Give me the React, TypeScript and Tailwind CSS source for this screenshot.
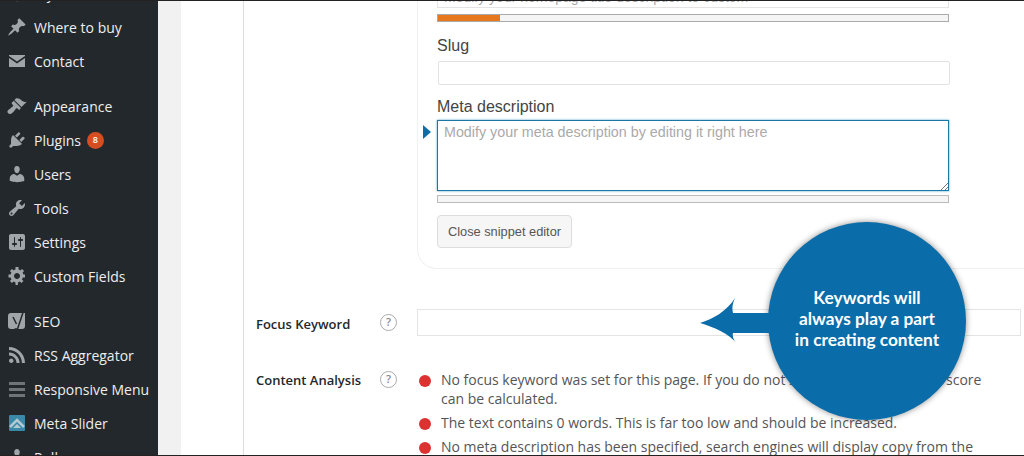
import type { ReactNode } from 'react';

const DashIcon = ({ d, rule }: { d: string; rule?: 'evenodd' }) => (
  <svg width="20" height="20" viewBox="0 0 20 20">
    <path fill="#a0a5aa" fillRule={rule} d={d} />
  </svg>
);

const PIN = 'M10.44 3.02l1.82-1.82 6.36 6.35-1.83 1.82c-1.05-.68-2.48-.57-3.41.36l-.75.75c-.92.93-1.04 2.35-.35 3.41l-1.83 1.82-2.41-2.41-2.8 2.79c-.42.42-3.38 2.71-3.8 2.29s1.86-3.39 2.28-3.81l2.79-2.79L4.1 9.36l1.83-1.82c1.05.69 2.48.57 3.41-.36l.75-.75c.93-.92 1.04-2.35.35-3.41z';
const MAIL = 'M2 4h16v1L10 10.500 2 5zM2 7l8 5.500L18 7v9H2z';
const BRUSH = 'M14.48 11.06L7.41 3.99l1.5-1.5c.5-.56 2.3-.47 3.51.32 1.21.8 1.43 1.28 2.91 2.1 1.18.64 2.45 1.26 4.45.85zm-.71.71L6.7 4.7 4.93 6.47c-.39.39-.39 1.02 0 1.41l1.06 1.06c.39.39.39 1.03 0 1.42-.6.6-1.43 1.11-2.21 1.69-.35.26-.7.53-1.01.84C1.43 13.23.4 14.8.4 15.6c0 1.22 1.22 2.41 2.44 2.44.8 0 2.37-1.03 3.71-2.37.31-.31.58-.66.84-1.01.58-.78 1.09-1.61 1.69-2.21.39-.39 1.03-.39 1.42 0l1.06 1.06c.39.39 1.02.39 1.41 0z';
const PLUG = 'M13.11 4.36L9.87 7.6 8 5.73l3.24-3.24c.35-.34 1.05-.2 1.56.32.52.51.66 1.21.31 1.55zm-8 1.77l.91-1.12 9.01 9.01-1.19.84c-.71.71-2.63 1.16-3.82 1.16H6.14L4.9 17.26c-.59.59-1.54.59-2.12 0-.59-.58-.59-1.53 0-2.12l1.24-1.24v-3.88c0-1.13.4-3.19 1.09-3.89zm7.26 3.97l3.24-3.24c.34-.35 1.04-.21 1.55.31.52.51.66 1.21.31 1.55l-3.24 3.25z';
const USER = 'M10 9.25c-2.27 0-2.73-3.44-2.73-3.44C7 4.02 7.82 2 9.97 2c2.16 0 2.98 2.02 2.71 3.81 0 0-.41 3.44-2.68 3.44zm0 2.57L12.72 10c2.39 0 4.52 2.33 4.52 4.53v2.49s-3.65 1.13-7.24 1.13c-3.65 0-7.24-1.13-7.24-1.13v-2.49c0-2.25 1.94-4.48 4.47-4.48z';
const WRENCH = 'M16.68 9.77c-1.34 1.34-3.3 1.67-4.95.99l-5.41 6.52c-.99.99-2.59.99-3.58 0s-.99-2.59 0-3.57l6.52-5.42c-.68-1.65-.35-3.61.99-4.95 1.28-1.28 3.12-1.62 4.72-1.06l-2.89 2.89 2.82 2.82 2.86-2.87c.53 1.58.18 3.39-1.08 4.65zM3.81 16.21c.4.39 1.04.39 1.43 0 .4-.4.4-1.04 0-1.43-.39-.4-1.03-.4-1.43 0-.39.39-.39 1.03 0 1.43z';
const SLIDERS = 'M18 16V4c0-1.100-.9-2-2-2H4c-1.100 0-2 .9-2 2v12c0 1.100.9 2 2 2h12c1.100 0 2-.9 2-2zM8 11h1c.55 0 1 .45 1 1s-.45 1-1 1H8v1.500c0 .28-.22.5-.5.5s-.5-.22-.5-.5V13H6c-.55 0-1-.45-1-1s.45-1 1-1h1V5.500c0-.28.22-.5.5-.5s.5.22.5.5V11zm5-2h-1c-.55 0-1-.45-1-1s.45-1 1-1h1V5.500c0-.28.22-.5.5-.5s.5.22.5.5V7h1c.55 0 1 .45 1 1s-.45 1-1 1h-1v5.500c0 .28-.22.5-.5.5s-.5-.22-.5-.5V9z';
const GEAR = 'M18 11.500h-2.180c-.17.7-.47 1.350-.86 1.930l1.540 1.540-2.120 2.120-1.540-1.540c-.58.39-1.230.69-1.930.86V19h-1.500H8.500v-2.590c-.7-.17-1.350-.47-1.930-.86l-1.540 1.540-2.120-2.120 1.540-1.540c-.39-.58-.69-1.230-.86-1.930H1.500v-3h2.090c.17-.7.47-1.350.86-1.930L2.910 5.030l2.120-2.120 1.540 1.540c.58-.39 1.230-.69 1.930-.86V1h3v2.590c.7.17 1.350.47 1.930.86l1.540-1.540 2.120 2.120-1.540 1.540c.39.58.69 1.230.86 1.930H18zM10 13c1.660 0 3-1.340 3-3s-1.340-3-3-3-3 1.340-3 3 1.340 3 3 3z';
const RSS = 'M14.92 18H18C18 9.320 10.680 2 2 2v3.080c7.020 0 12.920 5.900 12.920 12.920zm-5.400 0H12.600C12.600 12.220 7.780 7.400 2 7.400v3.080c4.120 0 7.520 3.400 7.520 7.520zM4.250 18c1.250 0 2.250-1 2.250-2.250s-1-2.250-2.250-2.250S2 14.500 2 15.750 3 18 4.250 18z';

const YoastIcon = () => (
  <svg width="20" height="22" viewBox="0 0 20 22">
    <path fill="#a0a5aa" d="M4 3h14v13a3 3 0 0 1-3 3H4a3 3 0 0 1-3-3V6a3 3 0 0 1 3-3z" />
    <path fill="none" stroke="#23282d" strokeWidth="1.500" d="M6 7l3.500 7M16.500 1L10.500 19H7.500" />
  </svg>
);

const BarsIcon = () => (
  <div className="flex w-4 flex-col gap-[3px]">
    <div className="h-[3px] bg-[#6f7479]" />
    <div className="h-[3px] bg-[#6f7479]" />
    <div className="h-[3px] bg-[#6f7479]" />
  </div>
);

const SliderIcon = () => (
  <svg width="16" height="16" viewBox="0 0 16 16">
    <rect width="16" height="16" rx="1" fill="#3b88a8" />
    <path fill="none" stroke="#b4c8d2" strokeWidth="2.500" d="M1 12l7-7 7 7" />
    <path fill="#b4c8d2" d="M4 13l4-4 4 4z" />
  </svg>
);

const menu: { label: string; icon: ReactNode; badge?: string; gap?: boolean }[] = [
  { label: 'Styles', icon: <DashIcon d={USER} /> },
  { label: 'Where to buy', icon: <DashIcon d={PIN} /> },
  { label: 'Contact', icon: <DashIcon d={MAIL} /> },
  { label: 'Appearance', icon: <DashIcon d={BRUSH} />, gap: true },
  { label: 'Plugins', icon: <DashIcon d={PLUG} />, badge: '8' },
  { label: 'Users', icon: <DashIcon d={USER} /> },
  { label: 'Tools', icon: <DashIcon d={WRENCH} /> },
  { label: 'Settings', icon: <DashIcon d={SLIDERS} rule="evenodd" /> },
  { label: 'Custom Fields', icon: <DashIcon d={GEAR} rule="evenodd" /> },
  { label: 'SEO', icon: <YoastIcon />, gap: true },
  { label: 'RSS Aggregator', icon: <DashIcon d={RSS} /> },
  { label: 'Responsive Menu', icon: <BarsIcon /> },
  { label: 'Meta Slider', icon: <SliderIcon /> },
  { label: 'Polls', icon: <DashIcon d={USER} /> }
];

const Help = () => (
  <div className="flex h-[17px] w-[17px] items-center justify-center rounded-full border-[1.500px] border-[#aaa] text-[11px] font-semibold text-[#888]">
    ?
  </div>
);

const Dot = () => <div className="mt-[5px] h-3 w-3 shrink-0 rounded-full bg-[#dc3232]" />;

const checks = [
  'No focus keyword was set for this page. If you do not set a focus keyword, no score can be calculated.',
  'The text contains 0 words. This is far too low and should be increased.',
  'No meta description has been specified, search engines will display copy from the page instead.'
];

export default function App() {
  return (
    <div className="relative flex h-[456px] w-[1024px] overflow-hidden border-y border-[#222] bg-white font-['Open_Sans',sans-serif]">
      <aside className="-mt-[25px] w-[158px] shrink-0 bg-[#23282d]">
        {menu.map((m) => (
          <div key={m.label} className={`flex h-[34px] items-center ${m.gap ? 'mt-[11px]' : ''}`}>
            <div className="flex w-[34px] shrink-0 justify-center">{m.icon}</div>
            <span className="text-[14px] text-[#eee]">{m.label}</span>
            {m.badge && (
              <span className="ml-[6px] flex h-[17px] w-[17px] items-center justify-center rounded-full bg-[#d54e21] text-[9px] font-semibold text-white">
                {m.badge}
              </span>
            )}
          </div>
        ))}
      </aside>
      <main className="flex flex-1 bg-[#f1f1f1] pl-[23px]">
        <div className="w-[62px] shrink-0 bg-white" />
        <div className="flex-1 border-l border-[#ddd] bg-white pl-[12px]">
          <div className="ml-[161px] -mt-[9px] h-[277px] rounded-bl-[20px] border-b border-l border-[#f1f1f1] pl-[19px] font-['Liberation_Sans',sans-serif]">
            <div className="h-[16px] w-[512px] overflow-hidden border border-[#e4e4e4] pl-[6px] text-[14px] leading-[8px] text-[#aaa]">
              Modify your homepage title description to custom
            </div>
            <div className="mt-[6px] h-[8px] w-[512px] border border-[#aaa] bg-[#f5f5f5]">
              <div className="h-full w-[62px] bg-[#e6781e]" />
            </div>
            <div className="mt-[14px] h-[20px] text-[16px] leading-[20px] text-[#444]">Slug</div>
            <div className="ml-px mt-[5px] h-[24px] w-[512px] rounded-[2px] border border-[#e2e2e2]" />
            <div className="mt-[12px] h-[20px] text-[16px] leading-[20px] text-[#444]">Meta description</div>
            <div className="relative mt-[3px] h-[71px] w-[512px] border border-[#1c76a6] px-[6px] text-[14.300px] leading-[22px] text-[#aaa] shadow-[0_0_2px_rgba(30,140,190,0.8)]">
              Modify your meta description by editing it right here
              <div className="absolute -left-[15px] top-[4px] h-0 w-0 border-y-[7px] border-l-[8px] border-y-transparent border-l-[#0f6ea6]" />
              <svg className="absolute bottom-0 right-0" width="8" height="8" viewBox="0 0 8 8">
                <path stroke="#777" fill="none" d="M1 8l7-7M5 8l3-3" />
              </svg>
            </div>
            <div className="mt-[4px] h-[8px] w-[512px] border border-[#bbb] bg-[#f5f5f5]" />
            <button className="mt-[12px] h-[33px] w-[135px] rounded-[4px] border border-[#ddd] bg-[#f6f6f6] text-[12.800px] text-[#555]">
              Close snippet editor
            </button>
          </div>
          <div className="mt-[40px] flex items-center">
            <div className="w-[124px] pt-[5px] text-[13px] font-semibold text-[#23282d]">Focus Keyword</div>
            <div className="w-[37px]"><Help /></div>
            <div className="h-[27px] w-[604px] border border-[#e4e4e4]" />
          </div>
          <div className="mt-[34px] flex items-start">
            <div className="w-[124px] pt-[1px] text-[13px] font-semibold text-[#23282d]">Content Analysis</div>
            <div className="w-[37px] pt-[1px]"><Help /></div>
            <div className="flex w-[580px] flex-col gap-[5px]">
              {checks.map((c) => (
                <div key={c} className="flex gap-[10px] pl-[2px]">
                  <Dot />
                  <p className="text-[14px] leading-[19px] text-[#555]">{c}</p>
                </div>
              ))}
            </div>
          </div>
        </div>
      </main>
      {/* callout */}
      <div className="absolute left-[768px] top-[221px] flex h-[198px] w-[198px] items-center justify-center rounded-full bg-[#0a6ca8] pb-[5px] text-center font-['Lato',sans-serif] text-[17.300px] font-bold leading-[21px] text-white shadow-[0_0_6px_rgba(0,0,0,0.45)]">
        <div>
          Keywords will
          <br />
          always play a part
          <br />
          in creating content
        </div>
      </div>
      <svg className="absolute left-[699px] top-[296px]" width="72" height="48" viewBox="0 0 72 48">
        <path fill="#0a6ca8" d="M1 26C14 22 28 14 36 1C33 8 33 12 34 16H71V36H34C33 40 35 44 39 48C30 36 14 30 1 26Z" />
      </svg>
    </div>
  );
}
